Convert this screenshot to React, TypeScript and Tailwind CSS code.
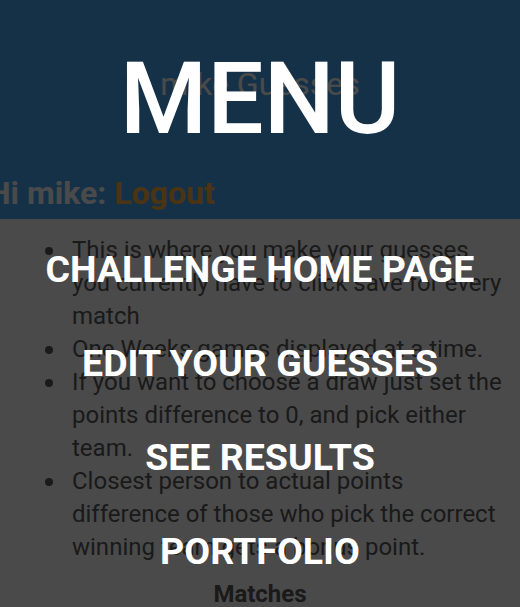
import { useState } from "react";

const rules: string[] = [
    "This is where you make your guesses you currently have to click save for every match",
    "One Weeks games displayed at a time.",
    "If you want to choose a draw just set the points difference to 0, and pick either team.",
    "Closest person to actual points difference of those who pick the correct winning team gets a bonus point.",
];

const links: string[] = ["CHALLENGE HOME PAGE", "EDIT YOUR GUESSES", "SEE RESULTS", "PORTFOLIO"];

function App() {
    const [open] = useState<boolean>(true);

    return (
        <div className="relative w-full h-[607px] overflow-hidden bg-white font-['Roboto',sans-serif]">
            <header id="top" className="h-[219px] bg-[#48a9f8] pt-[64px]">
                <h1 className="text-center text-[32px] leading-[40px] font-normal text-white">mike Guesses</h1>
                <h2 className="mt-[69px] -ml-[12px] text-[32px] leading-[40px] font-bold text-white whitespace-nowrap">
                    Hi mike: <span className="text-[#ffb345]">Logout</span>
                </h2>
            </header>

            <section id="rules" className="pt-[15px] pl-[45px]">
                <ul className="w-[459px]">
                    {rules.map((r, i) => (
                        <li key={i} className="flex text-[24px] leading-[33px] text-[#5a5a5a]">
                            <span className="w-[27px] h-[33px] shrink-0 flex items-center">
                                <span className="block w-[8px] h-[8px] rounded-full bg-[#5a5a5a]"></span>
                            </span>
                            <span>{r}</span>
                        </li>
                    ))}
                </ul>
                <h3 className="mt-[14px] -ml-[45px] text-center text-[24px] leading-[33px] font-bold text-[#5a5a5a]">Matches</h3>
            </section>

            {open && (
                <nav id="menu" className="absolute inset-0 bg-black/[0.71] flex flex-col items-center pt-[49px]">
                    <div className="text-[100px] leading-[100px] font-medium text-white">MENU</div>
                    <div className="mt-[73px] flex flex-col items-center">
                        {links.map((l) => (
                            <a key={l} className="text-[37.5px] leading-[94px] font-bold text-white whitespace-nowrap">{l}</a>
                        ))}
                    </div>
                </nav>
            )}
        </div>
    );
}

export default App;
